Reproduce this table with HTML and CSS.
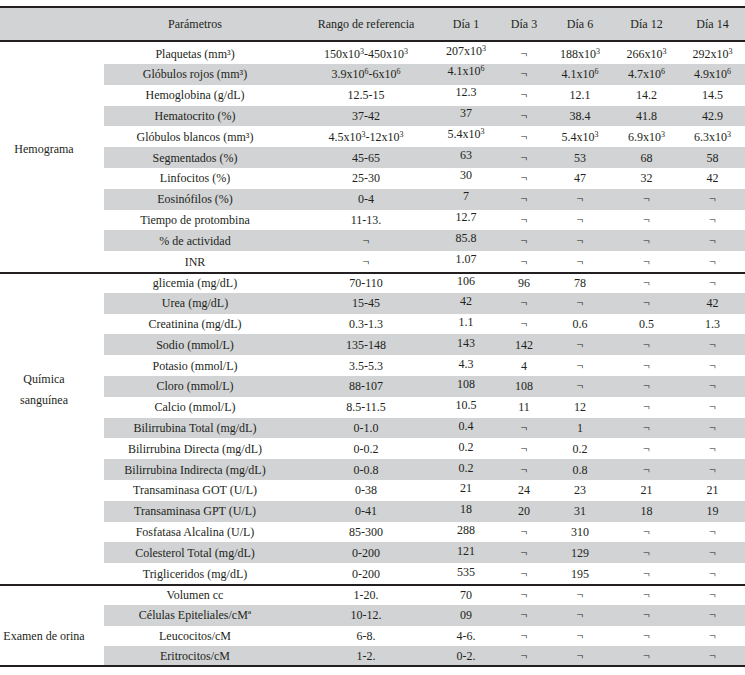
FILE: index.html
```html
<!DOCTYPE html>
<html lang="es">
<head>
<meta charset="utf-8">
<title>Parámetros de laboratorio</title>
<link rel="stylesheet" href="styles.css">
</head>
<body>
<table class="lab">
  <colgroup>
    <col class="c-grp"><col class="c-par"><col class="c-rng"><col class="c-d1"><col class="c-d3"><col class="c-d6"><col class="c-d12"><col class="c-d14">
  </colgroup>
  <thead>
    <tr>
      <th></th><th>Parámetros</th><th class="rng">Rango de referencia</th><th class="d1">Día 1</th><th class="d3">Día 3</th><th class="d6">Día 6</th><th>Día 12</th><th>Día 14</th>
    </tr>
  </thead>
  <tbody class="hemo">
    <tr class="top">
      <td class="grp g-hemo" rowspan="11">Hemograma</td>
      <td>Plaquetas (mm³)</td><td class="rng">150x10<span class="ex">3</span>-450x10<span class="ex">3</span></td><td class="d1">207x10<span class="ex">3</span></td><td class="d3">¬</td><td class="d6">188x10<span class="ex">3</span></td><td>266x10<span class="ex">3</span></td><td>292x10<span class="ex">3</span></td>
    </tr>
    <tr class="alt"><td>Glóbulos rojos (mm³)</td><td class="rng">3.9x10<span class="ex">6</span>-6x10<span class="ex">6</span></td><td class="d1">4.1x10<span class="ex">6</span></td><td class="d3">¬</td><td class="d6">4.1x10<span class="ex">6</span></td><td>4.7x10<span class="ex">6</span></td><td>4.9x10<span class="ex">6</span></td></tr>
    <tr><td>Hemoglobina (g/dL)</td><td class="rng">12.5-15</td><td class="d1">12.3</td><td class="d3">¬</td><td class="d6">12.1</td><td>14.2</td><td>14.5</td></tr>
    <tr class="alt"><td>Hematocrito (%)</td><td class="rng">37-42</td><td class="d1">37</td><td class="d3">¬</td><td class="d6">38.4</td><td>41.8</td><td>42.9</td></tr>
    <tr><td>Glóbulos blancos (mm³)</td><td class="rng">4.5x10<span class="ex">3</span>-12x10<span class="ex">3</span></td><td class="d1">5.4x10<span class="ex">3</span></td><td class="d3">¬</td><td class="d6">5.4x10<span class="ex">3</span></td><td>6.9x10<span class="ex">3</span></td><td>6.3x10<span class="ex">3</span></td></tr>
    <tr class="alt"><td>Segmentados (%)</td><td class="rng">45-65</td><td class="d1">63</td><td class="d3">¬</td><td class="d6">53</td><td>68</td><td>58</td></tr>
    <tr><td>Linfocitos (%)</td><td class="rng">25-30</td><td class="d1">30</td><td class="d3">¬</td><td class="d6">47</td><td>32</td><td>42</td></tr>
    <tr class="alt"><td>Eosinófilos (%)</td><td class="rng">0-4</td><td class="d1">7</td><td class="d3">¬</td><td class="d6">¬</td><td>¬</td><td>¬</td></tr>
    <tr><td>Tiempo de protombina</td><td class="rng">11-13.</td><td class="d1">12.7</td><td class="d3">¬</td><td class="d6">¬</td><td>¬</td><td>¬</td></tr>
    <tr class="alt"><td>% de actividad</td><td class="rng">¬</td><td class="d1">85.8</td><td class="d3">¬</td><td class="d6">¬</td><td>¬</td><td>¬</td></tr>
    <tr><td>INR</td><td class="rng">¬</td><td class="d1">1.07</td><td class="d3">¬</td><td class="d6">¬</td><td>¬</td><td>¬</td></tr>
  </tbody>
  <tbody class="quim">
    <tr class="sep">
      <td class="grp g-quim" rowspan="15">Química<br>sanguínea</td>
      <td>glicemia (mg/dL)</td><td class="rng">70-110</td><td class="d1">106</td><td class="d3">96</td><td class="d6">78</td><td>¬</td><td>¬</td>
    </tr>
    <tr class="alt"><td>Urea (mg/dL)</td><td class="rng">15-45</td><td class="d1">42</td><td class="d3">¬</td><td class="d6">¬</td><td>¬</td><td>42</td></tr>
    <tr><td>Creatinina (mg/dL)</td><td class="rng">0.3-1.3</td><td class="d1">1.1</td><td class="d3">¬</td><td class="d6">0.6</td><td>0.5</td><td>1.3</td></tr>
    <tr class="alt"><td>Sodio (mmol/L)</td><td class="rng">135-148</td><td class="d1">143</td><td class="d3">142</td><td class="d6">¬</td><td>¬</td><td>¬</td></tr>
    <tr><td>Potasio (mmol/L)</td><td class="rng">3.5-5.3</td><td class="d1">4.3</td><td class="d3">4</td><td class="d6">¬</td><td>¬</td><td>¬</td></tr>
    <tr class="alt"><td>Cloro (mmol/L)</td><td class="rng">88-107</td><td class="d1">108</td><td class="d3">108</td><td class="d6">¬</td><td>¬</td><td>¬</td></tr>
    <tr><td>Calcio (mmol/L)</td><td class="rng">8.5-11.5</td><td class="d1">10.5</td><td class="d3">11</td><td class="d6">12</td><td>¬</td><td>¬</td></tr>
    <tr class="alt"><td>Bilirrubina Total (mg/dL)</td><td class="rng">0-1.0</td><td class="d1">0.4</td><td class="d3">¬</td><td class="d6">1</td><td>¬</td><td>¬</td></tr>
    <tr><td>Bilirrubina Directa (mg/dL)</td><td class="rng">0-0.2</td><td class="d1">0.2</td><td class="d3">¬</td><td class="d6">0.2</td><td>¬</td><td>¬</td></tr>
    <tr class="alt"><td>Bilirrubina Indirecta (mg/dL)</td><td class="rng">0-0.8</td><td class="d1">0.2</td><td class="d3">¬</td><td class="d6">0.8</td><td>¬</td><td>¬</td></tr>
    <tr><td>Transaminasa GOT (U/L)</td><td class="rng">0-38</td><td class="d1">21</td><td class="d3">24</td><td class="d6">23</td><td>21</td><td>21</td></tr>
    <tr class="alt"><td>Transaminasa GPT (U/L)</td><td class="rng">0-41</td><td class="d1">18</td><td class="d3">20</td><td class="d6">31</td><td>18</td><td>19</td></tr>
    <tr><td>Fosfatasa Alcalina (U/L)</td><td class="rng">85-300</td><td class="d1">288</td><td class="d3">¬</td><td class="d6">310</td><td>¬</td><td>¬</td></tr>
    <tr class="alt"><td>Colesterol Total (mg/dL)</td><td class="rng">0-200</td><td class="d1">121</td><td class="d3">¬</td><td class="d6">129</td><td>¬</td><td>¬</td></tr>
    <tr><td>Trigliceridos (mg/dL)</td><td class="rng">0-200</td><td class="d1">535</td><td class="d3">¬</td><td class="d6">195</td><td>¬</td><td>¬</td></tr>
  </tbody>
  <tbody class="orina">
    <tr class="sep">
      <td class="grp g-orina" rowspan="4">Examen de orina</td>
      <td>Volumen cc</td><td class="rng">1-20.</td><td class="d1">70</td><td class="d3">¬</td><td class="d6">¬</td><td>¬</td><td>¬</td>
    </tr>
    <tr class="alt"><td>Células Epiteliales/cMª</td><td class="rng">10-12.</td><td class="d1">09</td><td class="d3">¬</td><td class="d6">¬</td><td>¬</td><td>¬</td></tr>
    <tr><td>Leucocitos/cM</td><td class="rng">6-8.</td><td class="d1">4-6.</td><td class="d3">¬</td><td class="d6">¬</td><td>¬</td><td>¬</td></tr>
    <tr class="alt last"><td>Eritrocitos/cM</td><td class="rng">1-2.</td><td class="d1">0-2.</td><td class="d3">¬</td><td class="d6">¬</td><td>¬</td><td>¬</td></tr>
  </tbody>
</table>
</body>
</html>
```

FILE: styles.css
```css
html, body {
  margin: 0;
  padding: 0;
  background: #ffffff;
}

body {
  padding-top: 6px;
  font-family: "Liberation Serif", "Times New Roman", serif;
  font-size: 12px;
  color: #231f20;
}

.lab {
  width: 745px;
  table-layout: fixed;
  border-collapse: separate;
  border-spacing: 0;
}

.c-grp { width: 104px; }
.c-par { width: 182px; }
.c-rng { width: 154px; }
.c-d1 { width: 56px; }
.c-d3 { width: 56px; }
.c-d6 { width: 61px; }
.c-d12 { width: 67px; }
.c-d14 { width: 65px; }

.lab th,
.lab td {
  padding: 0;
  text-align: center;
  vertical-align: middle;
  font-weight: normal;
  line-height: 14px;
  white-space: nowrap;
}

.lab thead tr {
  height: 36px;
}

.lab thead th {
  background: #d1d3d4;
  border-top: 2px solid #231f20;
  border-bottom: 2px solid #231f20;
}

.lab tbody tr {
  height: 20.8px;
}

.lab tbody tr.top {
  height: 22px;
}

.lab tr.top td {
  padding-top: 2px;
}

.lab tr.sep td {
  border-top: 2px solid #231f20;
}

.lab tr.last td,
.lab td.g-orina {
  border-bottom: 2px solid #231f20;
}

.lab tr.alt td {
  background: #d1d3d4;
}

.lab td.grp {
  background: #ffffff;
  padding-right: 16px;
}

.lab td.g-hemo {
  padding-bottom: 17px;
}

.lab td.g-quim {
  line-height: 21px;
  padding-bottom: 78px;
}

.lab td.g-orina {
  padding-top: 20px;
}

.lab .rng {
  padding-left: 6px;
}

.lab .d1 {
  padding-right: 4px;
}

.lab .d3 {
  padding-left: 0;
}

.lab .d6 {
  padding-right: 5px;
}

.hemo .d1 {
  padding-bottom: 6px;
}

.lab .hemo tr.top td.d1 {
  padding-bottom: 6px;
}

.quim .d1 {
  padding-bottom: 4px;
}

.ex {
  font-size: 8px;
  line-height: 0;
  vertical-align: 4px;
}
```
